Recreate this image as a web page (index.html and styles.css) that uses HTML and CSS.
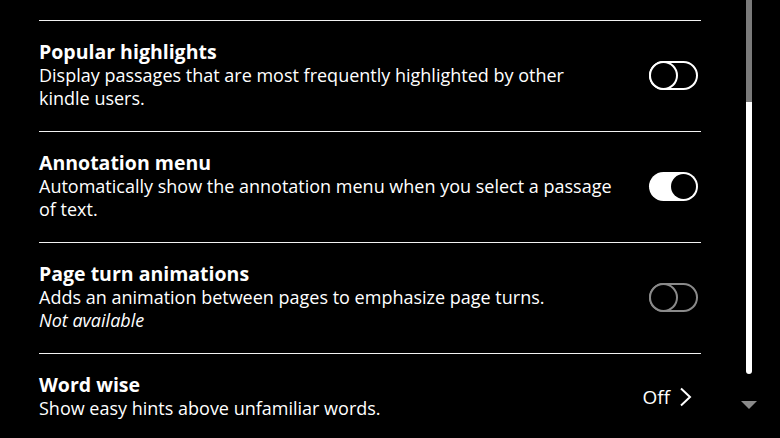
FILE: index.html
```html
<!DOCTYPE html>
<html lang="en">
<head>
<meta charset="utf-8">
<title>Settings</title>
<link rel="stylesheet" href="styles.css">
</head>
<body>
<div class="screen">
  <main class="list">
    <div class="spacer"></div>
    <section class="row">
      <div class="text">
        <h2 class="title">Popular highlights</h2>
        <p class="desc">Display passages that are most frequently highlighted by other kindle users.</p>
      </div>
      <div class="toggle off"><span class="knob"></span></div>
    </section>
    <section class="row">
      <div class="text">
        <h2 class="title">Annotation menu</h2>
        <p class="desc">Automatically show the annotation menu when you select a passage of text.</p>
      </div>
      <div class="toggle on"><span class="knob"></span></div>
    </section>
    <section class="row">
      <div class="text">
        <h2 class="title">Page turn animations</h2>
        <p class="desc">Adds an animation between pages to emphasize page turns.</p>
        <p class="desc note">Not available</p>
      </div>
      <div class="toggle off disabled"><span class="knob"></span></div>
    </section>
    <section class="row">
      <div class="text">
        <h2 class="title">Word wise</h2>
        <p class="desc">Show easy hints above unfamiliar words.</p>
      </div>
      <div class="value">
        <span>Off</span>
        <svg class="chev" width="14" height="20" viewBox="0 0 14 20"><polyline points="2,1.5 11,10 2,18.5" fill="none" stroke="#fff" stroke-width="2"/></svg>
      </div>
    </section>
  </main>
  <aside class="scroll">
    <div class="track">
      <div class="track-top"></div>
      <div class="thumb"></div>
    </div>
    <div class="arrow"></div>
  </aside>
</div>
</body>
</html>
```

FILE: styles.css
```css
html, body {
  margin: 0;
  padding: 0;
  background: #000;
}
body {
  width: 780px;
  height: 438px;
  overflow: hidden;
  font-family: "Open Sans", "Noto Sans", sans-serif;
  color: #fff;
}
.screen {
  display: flex;
  padding-left: 39px;
  height: 438px;
}
.list {
  width: 662px;
  flex: none;
}
.spacer {
  height: 20px;
}
.row {
  display: flex;
  align-items: center;
  border-top: 1px solid #f2f2f2;
  padding: 19px 0 21px;
}
.text {
  flex: 1;
  max-width: 577px;
}
.title {
  margin: 0;
  font-size: 19.5px;
  line-height: 24px;
  font-weight: 700;
}
.desc {
  margin: 0;
  font-size: 18px;
  line-height: 23px;
  font-weight: 400;
}
.note {
  font-style: italic;
}
.toggle {
  flex: none;
  margin-left: auto;
  margin-right: 3px;
  width: 49px;
  height: 29px;
  box-sizing: border-box;
  border-radius: 15px;
  position: relative;
}
.toggle.off {
  border: 2px solid #fff;
}
.toggle.off .knob {
  position: absolute;
  left: -2px;
  top: -2px;
  width: 29px;
  height: 29px;
  box-sizing: border-box;
  border: 2px solid #fff;
  border-radius: 50%;
  background: #000;
}
.toggle.disabled,
.toggle.disabled .knob {
  border-color: #8a8a8a;
}
.toggle.on {
  background: #fff;
}
.toggle.on .knob {
  position: absolute;
  right: 2px;
  top: 2px;
  width: 25px;
  height: 25px;
  border-radius: 50%;
  background: #000;
}
.value {
  flex: none;
  margin-left: auto;
  margin-right: 8px;
  display: flex;
  align-items: center;
  gap: 9px;
  font-size: 19px;
  line-height: 24px;
}
.chev {
  display: block;
}
.scroll {
  margin-left: 39px;
  width: 17px;
  display: flex;
  flex-direction: column;
  align-items: center;
}
.track {
  width: 6px;
  display: flex;
  flex-direction: column;
}
.track-top {
  height: 102px;
  background: #7a7a7a;
}
.thumb {
  height: 272px;
  background: #fff;
  border-radius: 0 0 3px 3px;
}
.arrow {
  margin-top: 27px;
  width: 0;
  height: 0;
  border-left: 8.5px solid transparent;
  border-right: 8.5px solid transparent;
  border-top: 8px solid #8a8a8a;
}
```
